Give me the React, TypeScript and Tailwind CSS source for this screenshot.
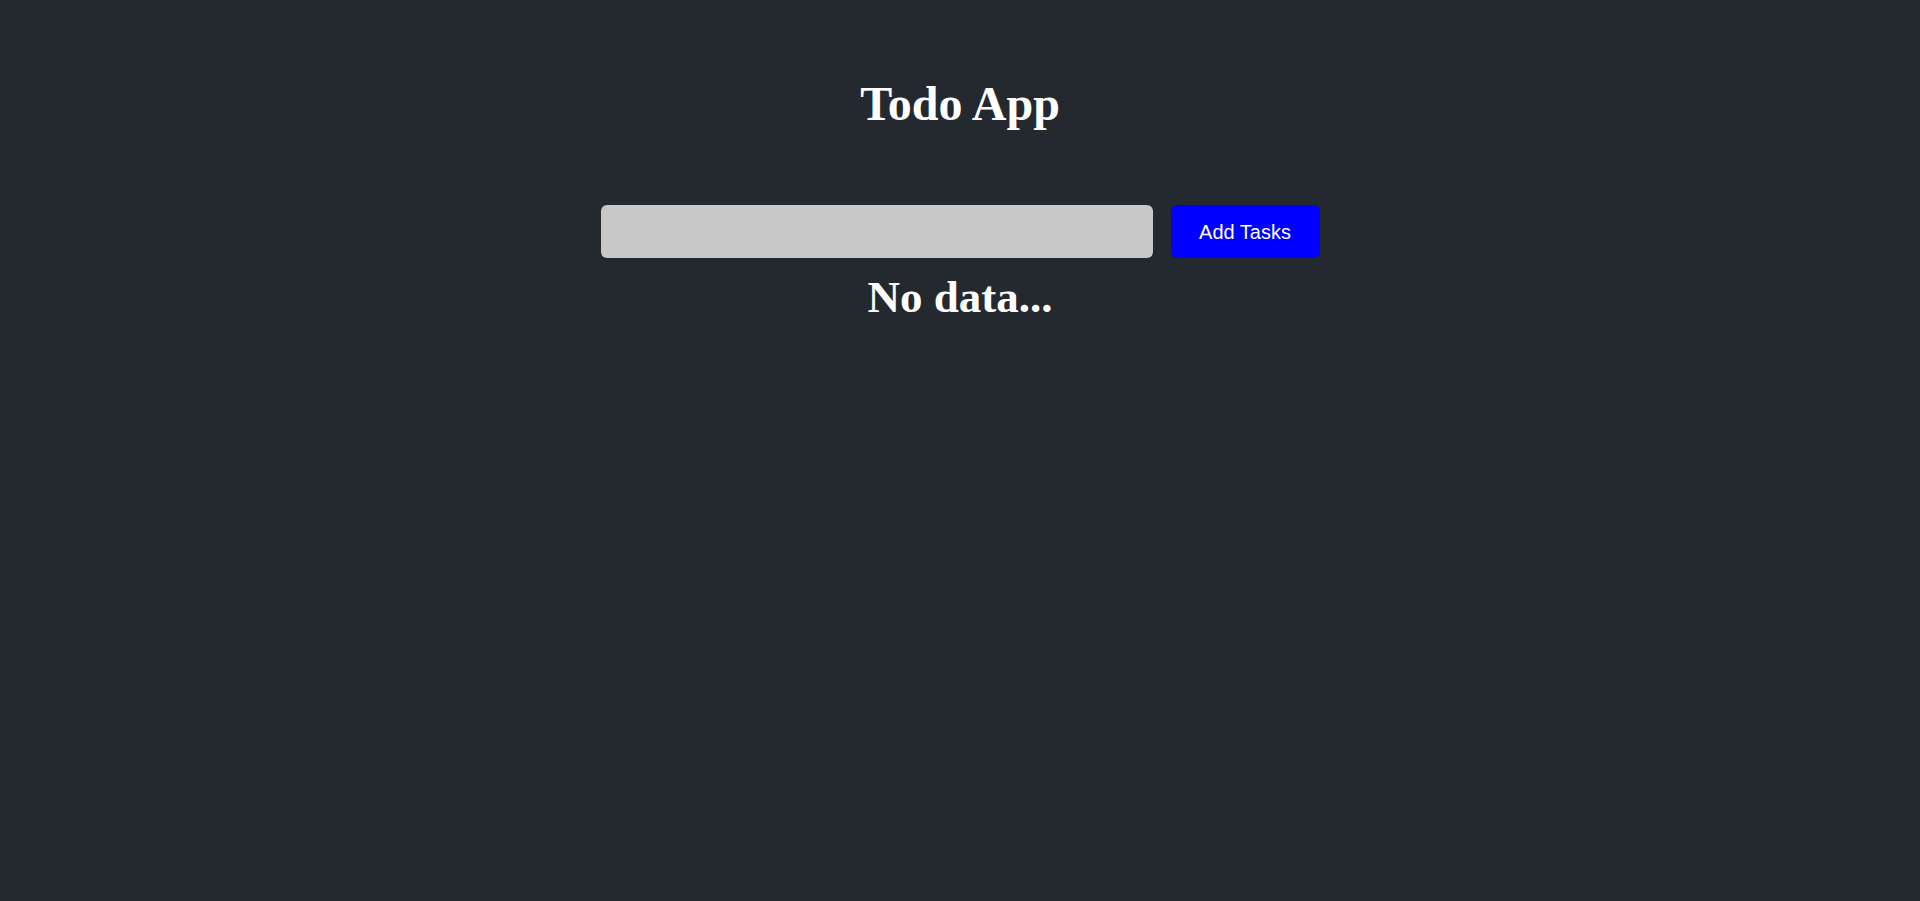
export default function App() {
  return (
    <div className="min-h-screen bg-[#23292e] flex flex-col items-center pt-[76px]" style={{ fontFamily: '"Liberation Serif", serif' }}>
      {/* Title */}
      <h1 className="text-white font-bold text-[48px] leading-[1.15]">Todo App</h1>

      {/* Input row */}
      <div className="flex items-center gap-[18px] mt-[74px]">
        <input
          type="text"
          className="w-[552px] h-[53px] rounded-[6px] bg-[#c8c8c8] border-0 outline-none px-3"
        />
        <button
          className="w-[149px] h-[53px] rounded-[6px] bg-[#0000ff] text-white text-[20px]"
          style={{ fontFamily: '"Liberation Sans", Arial, sans-serif' }}
        >
          Add Tasks
        </button>
      </div>

      <h2 className="text-white font-bold text-[45px] leading-[1.15] mt-[14px]">No data...</h2>
    </div>
  )
}
